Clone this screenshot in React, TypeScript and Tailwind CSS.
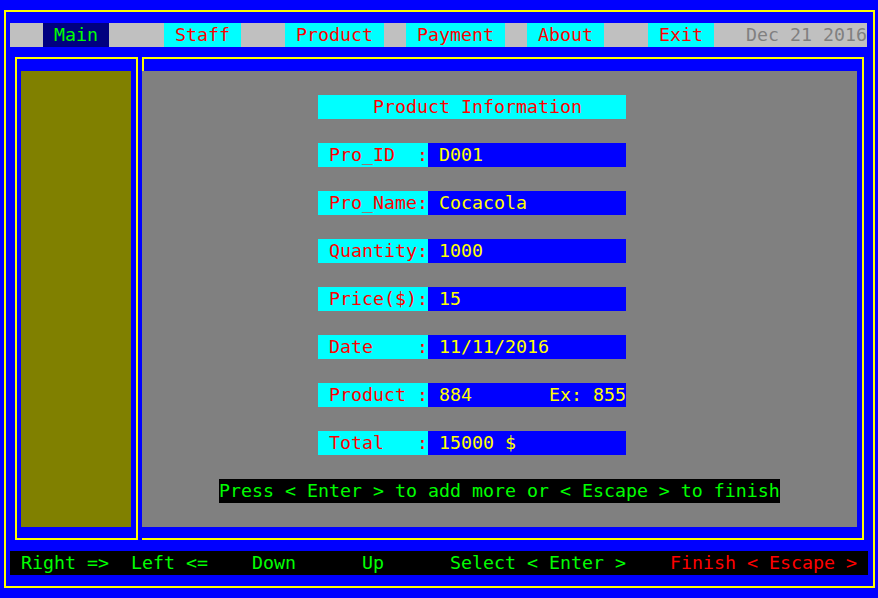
import React from 'react';

const mono = { fontFamily: '"DejaVu Sans Mono", "Liberation Mono", monospace' };

const menuItems = [
  { gap: 'w-[33px]', label: 'Main', w: 'w-[66px]', active: true },
  { gap: 'w-[55px]', label: 'Staff', w: 'w-[77px]' },
  { gap: 'w-[44px]', label: 'Product', w: 'w-[99px]' },
  { gap: 'w-[22px]', label: 'Payment', w: 'w-[99px]' },
  { gap: 'w-[22px]', label: 'About', w: 'w-[77px]' },
  { gap: 'w-[44px]', label: 'Exit', w: 'w-[66px]' },
];

const fields = [
  { label: 'Pro_ID  :', value: 'D001' },
  { label: 'Pro_Name:', value: 'Cocacola' },
  { label: 'Quantity:', value: '1000' },
  { label: 'Price($):', value: '15' },
  { label: 'Date    :', value: '11/11/2016' },
  { label: 'Product :', value: '884       Ex: 855' },
  { label: 'Total   :', value: '15000 $' },
];

const App: React.FC = () => {
  return (
    <div
      className="w-[878px] h-[598px] bg-[#0000ff] overflow-hidden pt-[10px] pl-[4px] text-[18.27px] leading-[24px] whitespace-pre"
      style={mono}
    >
      <div className="w-[871px] h-[578px] border-2 border-[#ffff00] pt-[11px] pl-[4px] flex flex-col">
        {/* menu bar */}
        <div className="w-[857px] h-[24px] bg-[#c0c0c0] flex">
          {menuItems.map((m) => (
            <React.Fragment key={m.label}>
              <div className={m.gap} />
              <div
                className={`${m.w} pl-[11px] ${
                  m.active ? 'bg-[#000080] text-[#00ff00]' : 'bg-[#00ffff] text-[#ff0000]'
                }`}
              >
                {m.label}
              </div>
            </React.Fragment>
          ))}
          <div className="flex-1 flex justify-end text-[#808080]">Dec 21 2016</div>
        </div>

        {/* panels */}
        <div className="mt-[10px] h-[483px] flex">
          <div className="ml-[5px] w-[123px] h-full border-2 border-[#ffff00] pt-[12px] pl-[4px]">
            <div className="w-[110px] h-[456px] bg-[#808000]" />
          </div>

          <div className="ml-[4px] w-[722px] h-full border-t-2 border-r-2 border-b-2 border-[#ffff00] flex flex-col">
            <div className="w-[2px] h-[12px] bg-[#ffff00]" />
            <div className="w-[715px] h-[456px] bg-[#808080] flex flex-col items-start pt-[24px] gap-[24px]">
              <div className="ml-[176px] w-[308px] h-[24px] bg-[#00ffff] text-[#ff0000] pl-[55px]">
                Product Information
              </div>
              {fields.map((f) => (
                <div key={f.label} className="ml-[176px] flex h-[24px]">
                  <div className="w-[110px] bg-[#00ffff] text-[#ff0000] pl-[11px]">{f.label}</div>
                  <div className="w-[198px] bg-[#0000ff] text-[#ffff00] pl-[11px]">{f.value}</div>
                </div>
              ))}
              <div className="ml-[77px] w-[561px] h-[24px] bg-black text-[#00ff00]">
                Press &lt; Enter &gt; to add more or &lt; Escape &gt; to finish
              </div>
            </div>
          </div>
        </div>

        {/* status bar */}
        <div className="mt-[11px] w-[858px] h-[24px] bg-black flex pl-[11px] text-[#00ff00]">
          <span className="w-[110px]">Right =&gt;</span>
          <span className="w-[121px]">Left &lt;=</span>
          <span className="w-[110px]">Down</span>
          <span className="w-[88px]">Up</span>
          <span className="w-[220px]">Select &lt; Enter &gt;</span>
          <span className="text-[#ff0000]">Finish &lt; Escape &gt;</span>
        </div>
      </div>
    </div>
  );
};

export default App;
